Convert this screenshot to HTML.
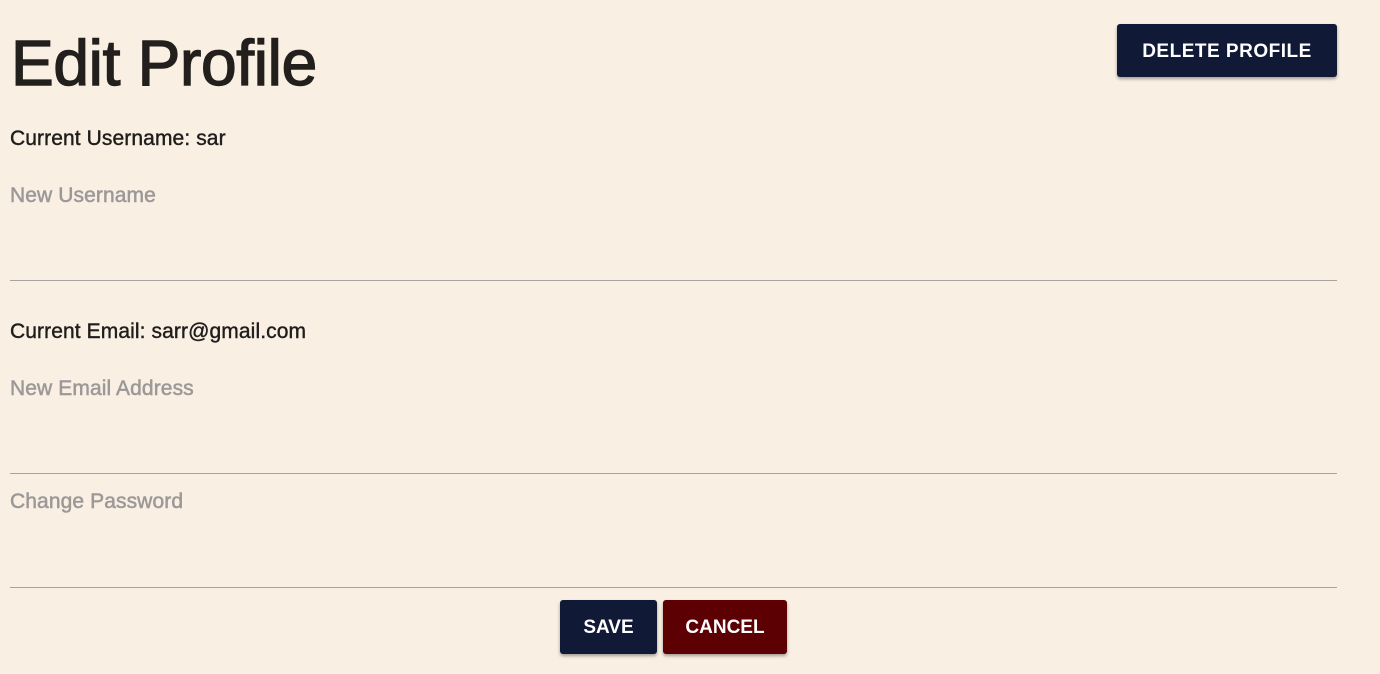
<!DOCTYPE html>
<html><head><style>
body{margin:0;width:1380px;height:674px;background:#f9efe3;font-family:"Liberation Sans",sans-serif;position:relative;overflow:hidden}
.a{position:absolute;white-space:nowrap}
h1{position:absolute;left:11px;top:26px;margin:0;font-size:64px;font-weight:normal;color:#231f1d;letter-spacing:-0.3px;-webkit-text-stroke:1.4px #231f1d}
.lbl{font-size:21px;color:#1f1d1c;left:10px;-webkit-text-stroke:0.4px #1f1d1c;letter-spacing:0.1px}
.ph{font-size:21px;color:#9c9898;left:10px;-webkit-text-stroke:0.5px #9c9898;letter-spacing:0.1px}
.line{position:absolute;left:10px;width:1327px;height:1px;background:#a8a39e}
.btn{position:absolute;color:#fff;font-weight:bold;display:flex;align-items:center;justify-content:center;border-radius:3px;box-shadow:0 2px 3px rgba(0,0,0,.35);font-size:19px;padding-top:2px;box-sizing:border-box}
</style></head><body>
<h1>Edit Profile</h1>
<div class="btn" style="left:1117px;top:24px;width:220px;height:53px;background:#101936;letter-spacing:0.5px">DELETE PROFILE</div>
<div class="a lbl" style="top:127px">Current Username: sar</div>
<div class="a ph" style="top:184px">New Username</div>
<div class="line" style="top:280px"></div>
<div class="a lbl" style="top:320px">Current Email: sarr@gmail.com</div>
<div class="a ph" style="top:377px">New Email Address</div>
<div class="line" style="top:473px"></div>
<div class="a ph" style="top:490px">Change Password</div>
<div class="line" style="top:587px"></div>
<div class="btn" style="left:560px;top:600px;width:97px;height:54px;background:#101936">SAVE</div>
<div class="btn" style="left:663px;top:600px;width:124px;height:54px;background:#5c0003">CANCEL</div>
</body></html>
